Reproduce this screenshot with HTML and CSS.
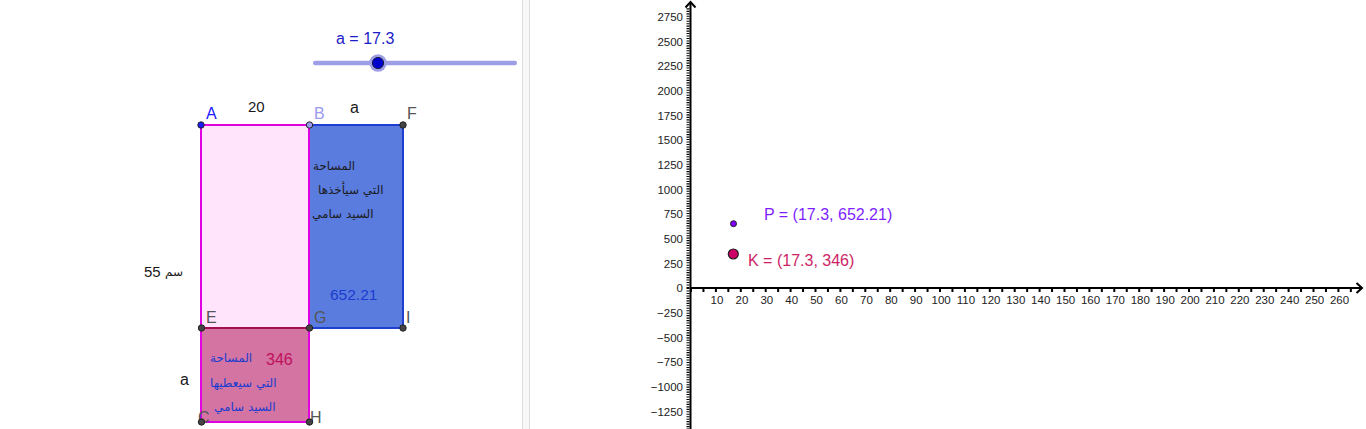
FILE: index.html
```html
<!DOCTYPE html>
<html lang="ar">
<head>
<meta charset="utf-8">
<title>GeoGebra</title>
<link rel="stylesheet" href="styles.css">
</head>
<body dir="ltr">
<div class="app">
  <div class="panel left">
    <svg class="canvas" width="522" height="429" viewBox="0 0 522 429">
      <!-- slider -->
      <text class="t16 slidertxt" x="336" y="44">a = 17.3</text>
      <line class="sliderline" x1="315.3" y1="63" x2="514.7" y2="63"/>
      <circle class="halo" cx="378" cy="63" r="8.7"/>
      <circle class="knob" cx="378" cy="63" r="5.6"/>

      <!-- rectangles -->
      <rect class="rblue" x="309" y="125" width="94" height="203"/>
      <rect class="rpink" x="201" y="125" width="108" height="203"/>
      <rect class="rrose" x="201" y="328" width="108" height="94"/>
      <line class="rosetop" x1="201" y1="328" x2="309" y2="328"/>

      <!-- labels -->
      <text class="t15 dark" x="248" y="112">20</text>
      <text class="t16 dark" x="350" y="113">a</text>
      <text class="t16 lblA" x="206" y="119">A</text>
      <text class="t16 lblB" x="314" y="119">B</text>
      <text class="t16 gray" x="407" y="119">F</text>
      <text class="t16 gray" x="206" y="323">E</text>
      <text class="t16 gray" x="314" y="323">G</text>
      <text class="t16 gray" x="406" y="323">I</text>
      <text class="t16 gray" x="198" y="423">C</text>
      <text class="t16 gray" x="310" y="423">H</text>

      <text class="t15 dark" x="144" y="277">55</text>
      <text class="ar dark" x="165" y="276">سم</text>
      <text class="t16 dark" x="180" y="385">a</text>

      <text class="ar dark" x="313" y="170">المساحة</text>
      <text class="ar dark" x="318" y="194">التي سيأخذها</text>
      <text class="ar dark" x="312" y="218">السيد سامي</text>
      <text class="t155 bluetxt" x="330" y="300">652.21</text>

      <text class="ar bluetxt" x="210" y="362">المساحة</text>
      <text class="t16 crim" x="266" y="365">346</text>
      <text class="ar bluetxt" x="210" y="387">التي سيعطيها</text>
      <text class="ar bluetxt" x="214" y="411">السيد سامي</text>

      <!-- points -->
      <circle class="pt ptA" cx="201" cy="125" r="3.2"/>
      <circle class="pt ptB" cx="309.5" cy="125" r="3.2"/>
      <circle class="pt ptG" cx="403" cy="125" r="3.2"/>
      <circle class="pt ptG" cx="201.5" cy="328" r="3.2"/>
      <circle class="pt ptG" cx="309.5" cy="328" r="3.2"/>
      <circle class="pt ptG" cx="403" cy="328" r="3.2"/>
      <circle class="pt ptG" cx="201.5" cy="422" r="3.2"/>
      <circle class="pt ptG" cx="309.5" cy="422" r="3.2"/>
    </svg>
  </div>
  <div class="divider"></div>
  <div class="panel right">
    <svg class="canvas" width="836" height="429" viewBox="530 0 836 429">
      <!-- minor ticks -->
      <line class="ytick" x1="688" y1="288" x2="688" y2="429"/>
      <line class="ytick" x1="688" y1="288" x2="688" y2="8"/>
      <line class="xtick" x1="690" y1="290.5" x2="1354" y2="290.5"/>
      <!-- axes -->
      <line class="axis" x1="690.5" y1="429" x2="690.5" y2="2"/>
      <polyline class="axis" points="685.5,7.5 690.5,2 695.5,7.5"/>
      <line class="axis" x1="690" y1="288" x2="1362" y2="288"/>
      <polyline class="axis" points="1356.5,283 1362,288 1356.5,293"/>

      <!-- y labels -->
      <g class="ylab">
        <text x="683" y="21">2750</text>
        <text x="683" y="46">2500</text>
        <text x="683" y="70">2250</text>
        <text x="683" y="95">2000</text>
        <text x="683" y="120">1750</text>
        <text x="683" y="144">1500</text>
        <text x="683" y="169">1250</text>
        <text x="683" y="194">1000</text>
        <text x="683" y="218">750</text>
        <text x="683" y="243">500</text>
        <text x="683" y="268">250</text>
        <text x="683" y="292">0</text>
        <text x="683" y="317">−250</text>
        <text x="683" y="342">−500</text>
        <text x="683" y="366">−750</text>
        <text x="683" y="391">−1000</text>
        <text x="683" y="416">−1250</text>
      </g>
      <!-- x labels -->
      <g class="xlab">
        <text x="717" y="304">10</text>
        <text x="741.9" y="304">20</text>
        <text x="766.8" y="304">30</text>
        <text x="791.7" y="304">40</text>
        <text x="816.6" y="304">50</text>
        <text x="841.5" y="304">60</text>
        <text x="866.4" y="304">70</text>
        <text x="891.3" y="304">80</text>
        <text x="916.2" y="304">90</text>
        <text x="941.1" y="304">100</text>
        <text x="966" y="304">110</text>
        <text x="990.9" y="304">120</text>
        <text x="1015.8" y="304">130</text>
        <text x="1040.7" y="304">140</text>
        <text x="1065.6" y="304">150</text>
        <text x="1090.5" y="304">160</text>
        <text x="1115.4" y="304">170</text>
        <text x="1140.3" y="304">180</text>
        <text x="1165.2" y="304">190</text>
        <text x="1190.1" y="304">200</text>
        <text x="1215" y="304">210</text>
        <text x="1239.9" y="304">220</text>
        <text x="1264.8" y="304">230</text>
        <text x="1289.7" y="304">240</text>
        <text x="1314.6" y="304">250</text>
        <text x="1339.5" y="304">260</text>
      </g>

      <!-- points -->
      <circle class="pt ptP" cx="733.5" cy="223.7" r="3"/>
      <circle class="pt ptK" cx="733.3" cy="254" r="5"/>
      <text class="t16 lblP" x="764" y="220">P = (17.3, 652.21)</text>
      <text class="t16 lblK" x="748" y="266">K = (17.3, 346)</text>
    </svg>
  </div>
</div>
</body>
</html>
```
FILE: styles.css
```css
html, body {
  margin: 0;
  padding: 0;
  background: #ffffff;
}
.app {
  display: flex;
  width: 1366px;
  height: 429px;
  overflow: hidden;
  font-family: "Liberation Sans", Arial, sans-serif;
}
.panel {
  height: 429px;
  background: #ffffff;
}
.left { width: 522px; flex: 0 0 522px; }
.right { width: 836px; flex: 0 0 836px; }
.divider {
  width: 6px;
  flex: 0 0 6px;
  background: #f8f8f8;
  border-left: 1px solid #dcdcdc;
  border-right: 1px solid #dcdcdc;
}
.canvas { display: block; }

text { font-family: "Liberation Sans", Arial, sans-serif; }
.t15 { font-size: 15px; }
.t155 { font-size: 15.5px; }
.t16 { font-size: 16px; }
.ar {
  font-family: "DejaVu Sans", "Liberation Sans", sans-serif;
  font-size: 12px;
}
.dark { fill: #1a1a1a; }
.gray { fill: #555555; }
.lblA { fill: #1a1aff; }
.lblB { fill: #9a9aee; }
.slidertxt { fill: #1c1cc8; }
.bluetxt { fill: #1a3ccf; }
.crim { fill: #c0105a; }
.lblP { fill: #7f1fff; }
.lblK { fill: #cc1f66; }

.sliderline {
  stroke: #9e9ee6;
  stroke-width: 4.6;
  stroke-linecap: round;
}
.halo { fill: #9e9ee6; }
.knob { fill: #0000cc; stroke: #1a1a40; stroke-width: 1; }

.rblue { fill: #5b7cdf; stroke: #1f3fd1; stroke-width: 2; }
.rpink { fill: #ffe4fb; stroke: #e100e1; stroke-width: 2; }
.rrose { fill: #d374a3; stroke: #e100e1; stroke-width: 2; }
.rosetop { stroke: #a0104f; stroke-width: 2; }

.pt { stroke: #222222; stroke-width: 1; }
.ptA { fill: #1a1aff; }
.ptB { fill: #9a9aee; }
.ptG { fill: #444444; }
.ptP { fill: #7f00ff; }
.ptK { fill: #cc0066; stroke-width: 1.2; }

.axis {
  stroke: #000000;
  stroke-width: 2;
  fill: none;
}
.ytick {
  stroke: #000000;
  stroke-width: 3;
  stroke-dasharray: 1.1 1.365;
}
.xtick {
  stroke: #000000;
  stroke-width: 3;
  stroke-dasharray: 2 10.45;
}
.ylab text {
  font-size: 11.5px;
  fill: #222222;
  text-anchor: end;
}
.xlab text {
  font-size: 11.5px;
  fill: #222222;
  text-anchor: middle;
}
```
